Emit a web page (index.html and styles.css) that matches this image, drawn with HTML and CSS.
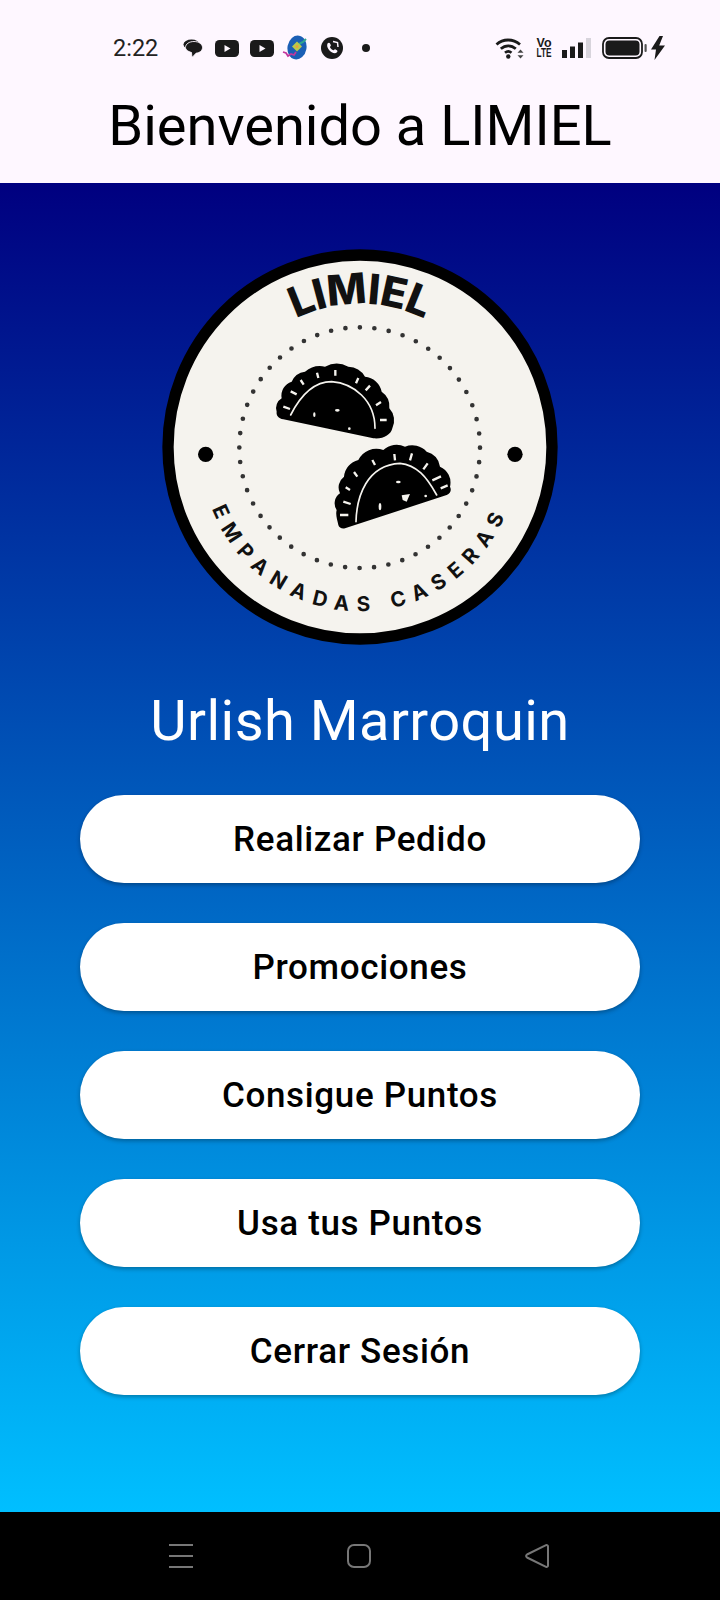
FILE: index.html
```html
<!DOCTYPE html>
<html lang="es">
<head>
<meta charset="utf-8">
<title>LIMIEL</title>
<link rel="stylesheet" href="styles.css">
</head>
<body>
<div class="screen">
  <header class="topbar">
    <div class="status">
      <div class="status-left">
        <span class="time">2:22</span>
        <svg class="ic-chat" viewBox="0 0 20 18"><ellipse cx="8.500" cy="5.500" rx="8" ry="5" fill="#1a1a1a"/><path d="M11 2.500c4.800 0 8.500 2.500 8.500 6 0 3.200-3 5.400-6.300 5.600L10 17.500c-.6.500-1.200.2-1.200-.5l-.3-3.500C5 12.500 2.500 10.800 2.500 8.500c0-3.500 3.700-6 8.500-6z" fill="#1a1a1a" stroke="#fef7ff" stroke-width=".9"/></svg>
        <svg class="ic-yt" viewBox="0 0 24 17"><rect width="24" height="17" rx="4.500" fill="#1a1a1a"/><path d="M9.500 5l6 3.500-6 3.500z" fill="#fef7ff"/></svg>
        <svg class="ic-yt" viewBox="0 0 24 17"><rect width="24" height="17" rx="4.500" fill="#1a1a1a"/><path d="M9.500 5l6 3.500-6 3.500z" fill="#fef7ff"/></svg>
        <svg class="ic-app" viewBox="0 0 26 26"><ellipse cx="15" cy="12.500" rx="9.500" ry="12" fill="#1b5fb5" transform="rotate(10 15 12.500)"/><path d="M17 9l4-2 3-3" stroke="#2fa58e" stroke-width="2" fill="none"/><path d="M15 6.500l5 5-5 5-5-5z" fill="#b9c94c"/><circle cx="15" cy="11.500" r="1.500" fill="#e8a33d"/><path d="M1 17l3 1 2 3 3-2 3 1 2-3" stroke="#c2379c" stroke-width="1.800" fill="none"/></svg>
        <svg class="ic-wa" viewBox="0 0 22 22"><circle cx="11" cy="11" r="11" fill="#1a1a1a"/><path d="M6.500 6.500c1-1 2-1 2.500 0l.8 1.600c.2.600 0 1-.6 1.500-.3.400-.2.800.2 1.400.7 1 1.500 1.700 2.400 2.100.5.200.9.200 1.200-.2.500-.6 1-.8 1.500-.5l1.400.9c.8.500.7 1.500-.2 2.300-1.200 1-3 .8-5-.4-2-1.300-3.600-3.200-4.300-5.300-.4-1.300-.2-2.500.1-3.400z" fill="#fef7ff"/><path d="M12 4.500l4.500 1 .5 4.500" stroke="#fef7ff" stroke-width="1.500" fill="none"/></svg>
        <span class="dot"></span>
      </div>
      <div class="status-right">
        <svg class="ic-wifi" viewBox="0 0 30 22"><path d="M1.500 7.500C8 1.500 18 1.500 25 7.500" stroke="#1a1a1a" stroke-width="2.800" fill="none"/><path d="M5.800 11.800c4.500-4 10.500-4 15 0" stroke="#1a1a1a" stroke-width="2.800" fill="none"/><path d="M10 15.800c2-1.800 4.500-1.800 6.500 0" stroke="#1a1a1a" stroke-width="2.600" fill="none"/><circle cx="13.300" cy="19.500" r="2.200" fill="#1a1a1a"/><path d="M25.500 12.500l3 3.200h-6zM25.500 21.500l3-3.200h-6z" fill="#444"/></svg>
        <svg class="ic-volte" viewBox="0 0 16 24"><text x="0.500" y="11" class="vo" textLength="15" lengthAdjust="spacingAndGlyphs">Vo</text><text x="0.500" y="21" class="lte" textLength="15" lengthAdjust="spacingAndGlyphs">LTE</text></svg>
        <svg class="ic-signal" viewBox="0 0 30 20"><rect x="0" y="12" width="5" height="8" fill="#1a1a1a"/><rect x="8" y="8.500" width="5" height="11.500" fill="#1a1a1a"/><rect x="16" y="4.500" width="5" height="15.500" fill="#1a1a1a"/><rect x="24" y="0" width="5" height="20" fill="#d8d4dc"/></svg>
        <svg class="ic-batt" viewBox="0 0 45 22"><rect x="1" y="1" width="39" height="20" rx="6" fill="none" stroke="#1a1a1a" stroke-width="1.800"/><rect x="3.500" y="3.500" width="34" height="15" rx="4" fill="#1a1a1a"/><rect x="42.500" y="7" width="2.200" height="8" rx="1" fill="#555"/></svg>
        <svg class="ic-bolt" viewBox="0 0 14 24"><path d="M8.500 0L0 13.500h5L3.500 24 14 9.500H8.200L12 0z" fill="#1a1a1a"/></svg>
      </div>
    </div>
    <h1 class="title">Bienvenido a LIMIEL</h1>
  </header>

  <main class="home">
    <svg class="logo" viewBox="0 0 1260 1260" role="img" aria-label="Logo LIMIEL Empanadas Caseras">
      <defs>
        <path id="arc-top" d="M200 621A430 430 0 0 1 1060 621"/>
        <path id="arc-bottom" d="M156 640A474 474 0 0 0 1104 640"/>
      </defs>
      <circle cx="630" cy="621" r="576" class="disc"/>
      <circle cx="629" cy="623" r="361" class="dots"/>
      <circle cx="167" cy="643" r="23" class="ink"/>
      <circle cx="1095" cy="643" r="23" class="ink"/>
      <text class="logo-name"><textPath href="#arc-top" startOffset="50%">LIMIEL</textPath></text>
      <text class="logo-sub"><textPath href="#arc-bottom" startOffset="50%">EMPANADAS CASERAS</textPath></text>
      <g transform="translate(330 330)">
        <path class="ink" d="M50 185A34 34 0 0 1 65 145A44 44 0 0 1 95 95A50 50 0 0 1 135 65A70 70 0 0 1 195 50A75 75 0 0 1 265 50A60 60 0 0 1 315 80A56 56 0 0 1 365 125A54 54 0 0 1 388 175A54 54 0 0 1 397 235C392 255 370 268 340 265L70 208C55 205 48 195 50 185Z"/>
        <path class="seam" d="M92 195C125 130 165 95 215 95C280 100 345 150 345 235"/>
        <path class="tick" d="M70 170L90 177M92 124L110 133M122 90L131 104M171 68L175 84M226 60V77M295 84L288 100M330 107L317 121M363 156L348 166M380 210H360"/>
        <ellipse class="fleck" cx="232" cy="181" rx="7" ry="4"/>
        <ellipse class="fleck" cx="163" cy="194" rx="3.500" ry="7"/>
        <circle class="fleck" cx="268" cy="236" r="4"/>
        <path class="ink" d="M235 525C232 510 226 495 230 480A36 36 0 0 1 240 430A40 40 0 0 1 252 380A56 56 0 0 1 295 330A60 60 0 0 1 370 300A58 58 0 0 1 435 290A58 58 0 0 1 500 305A52 52 0 0 1 540 350A52 52 0 0 1 570 410C575 420 572 430 560 435L255 535C245 537 237 533 235 525Z"/>
        <path class="seam" d="M288 515C290 440 320 345 420 340C470 345 500 380 530 435"/>
        <path class="tick" d="M240 495H265M250 455L272 462M257 412L270 420M282 366L292 380M337 330L345 345M403 312L405 331M456 310L450 331M503 340L490 358M543 379L517 391M563 406L542 415"/>
        <ellipse class="fleck" cx="360" cy="470" rx="4" ry="11"/>
        <path class="fleck" d="M425 436L450 432L440 455L428 450Z"/>
        <ellipse class="fleck" cx="415" cy="396" rx="7" ry="4"/>
        <circle class="fleck" cx="497" cy="438" r="4"/>
      </g>
    </svg>

    <h2 class="user">Urlish Marroquin</h2>

    <nav class="actions">
      <button class="action">Realizar Pedido</button>
      <button class="action">Promociones</button>
      <button class="action">Consigue Puntos</button>
      <button class="action">Usa tus Puntos</button>
      <button class="action">Cerrar Sesión</button>
    </nav>
  </main>

  <footer class="navbar">
    <svg class="nav-ic" viewBox="0 0 24 24"><path d="M0 1H24M0 12H24M0 23H24"/></svg>
    <svg class="nav-ic" viewBox="0 0 24 24"><rect x="1" y="1" width="22" height="22" rx="6"/></svg>
    <svg class="nav-ic" viewBox="0 0 24 24"><path d="M2 10.500L21 1.200C22 .800 23 1.300 23 2.500V21.500C23 22.700 22 23.200 21 22.800L2 13.500C.8 12.800.8 11.200 2 10.500Z"/></svg>
  </footer>
</div>
</body>
</html>
```

FILE: styles.css
```css
* { box-sizing: border-box; }

html, body {
  margin: 0;
  padding: 0;
}

body {
  font-family: Roboto, "Liberation Sans", sans-serif;
  background: #000;
}

.screen {
  width: 720px;
  height: 1600px;
  display: flex;
  flex-direction: column;
  overflow: hidden;
}

.topbar {
  height: 183px;
  flex: none;
  background: #fef7ff;
  display: flex;
  flex-direction: column;
}

.status {
  height: 96px;
  flex: none;
  padding: 0 55px 0 113px;
  display: flex;
  align-items: center;
  justify-content: space-between;
}

.status-left,
.status-right {
  display: flex;
  align-items: center;
}

.time {
  font-size: 23.5px;
  color: #222;
  margin-right: 25px;
}

.ic-chat { width: 20px; height: 18px; margin-right: 12px; }
.ic-yt { width: 24px; height: 17px; margin-right: 11px; }
.ic-app { width: 26px; height: 26px; margin: 0 13px 0 -3px; }
.ic-wa { width: 22px; height: 22px; margin-right: 19px; }

.dot {
  width: 8px;
  height: 8px;
  border-radius: 50%;
  background: #1a1a1a;
}

.ic-wifi { width: 30px; height: 22px; margin-right: 11px; }
.ic-volte { width: 16px; height: 24px; margin-right: 10px; overflow: visible; }
.ic-signal { width: 30px; height: 20px; margin-right: 10px; }
.ic-batt { width: 45px; height: 22px; margin-right: 4px; }
.ic-bolt { width: 14px; height: 24px; }

.vo, .lte {
  font-family: "Liberation Sans", sans-serif;
  font-weight: 700;
  fill: #1a1a1a;
}
.vo { font-size: 13px; }
.lte { font-size: 12px; }

.title {
  margin: 0;
  line-height: 60px;
  text-align: center;
  font-size: 56px;
  font-weight: 400;
  color: #000;
  white-space: nowrap;
}

.home {
  flex: 1;
  background: linear-gradient(to bottom, #000080, #00bfff);
  display: flex;
  flex-direction: column;
  align-items: center;
  padding-top: 57px;
}

.logo {
  width: 420px;
  height: 420px;
  flex: none;
}

.disc {
  fill: #f5f3ee;
  stroke: #000;
  stroke-width: 34;
}

.dots {
  fill: none;
  stroke: #333;
  stroke-width: 14;
  stroke-linecap: round;
  stroke-dasharray: 0 43.62;
}

.ink { fill: #000; }

.seam {
  fill: none;
  stroke: #f5f3ee;
  stroke-width: 5;
  stroke-linecap: round;
}

.tick {
  fill: none;
  stroke: #f5f3ee;
  stroke-width: 7;
}

.fleck { fill: #f5f3ee; }

.logo-name {
  font-family: Inter, sans-serif;
  font-weight: 800;
  font-size: 126px;
  letter-spacing: -2px;
  text-anchor: middle;
  fill: #111;
}

.logo-sub {
  font-family: Inter, sans-serif;
  font-weight: 700;
  font-size: 62px;
  letter-spacing: 26px;
  text-anchor: middle;
  fill: #111;
}

.user {
  margin: 28px 0 0;
  height: 66px;
  line-height: 66px;
  font-size: 56px;
  font-weight: 400;
  letter-spacing: .45px;
  color: #fff;
  white-space: nowrap;
}

.actions {
  width: 100%;
  margin-top: 41px;
  padding: 0 80px;
  display: flex;
  flex-direction: column;
  gap: 40px;
}

.action {
  height: 88px;
  border: 0;
  border-radius: 44px;
  background: #fff;
  box-shadow: 0 2px 4px rgba(0, 0, 0, .3);
  font-family: inherit;
  font-size: 35px;
  font-weight: 500;
  letter-spacing: .65px;
  color: #000;
}

.navbar {
  height: 88px;
  flex: none;
  background: #000;
  padding: 32px 171px 0 169px;
  display: flex;
  justify-content: space-between;
  align-items: flex-start;
}

.nav-ic {
  width: 24px;
  height: 24px;
  fill: none;
  stroke: #777;
  stroke-width: 2;
}
```
